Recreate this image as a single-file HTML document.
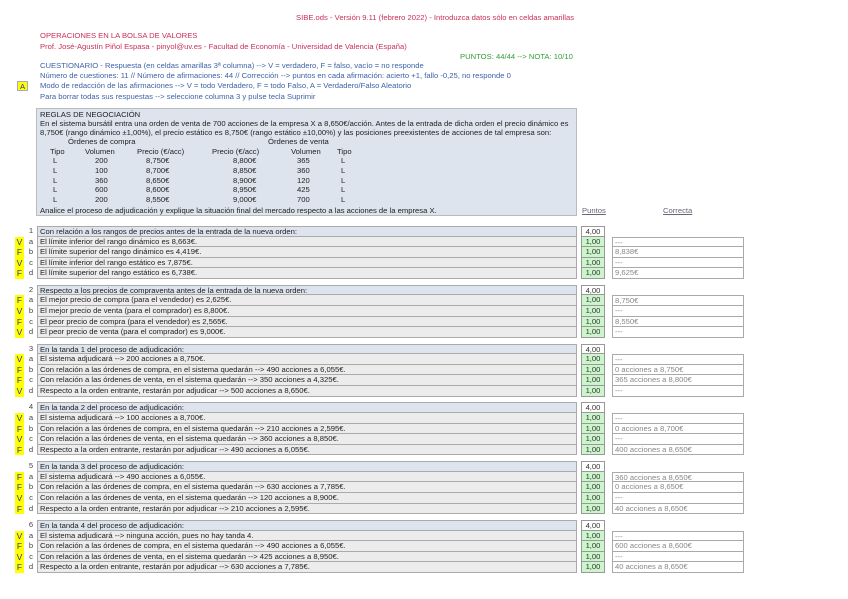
<!DOCTYPE html>
<html><head><meta charset="utf-8"><style>
*{margin:0;padding:0;box-sizing:border-box}
body{width:848px;height:599px;background:#fff;position:relative;overflow:hidden;font-family:"Liberation Sans",sans-serif;font-size:7.65px;color:#222}
.a{position:absolute;white-space:nowrap;line-height:10px}
.red{color:#c8305a}.blue{color:#3d62a8}.grn{color:#3a9a3a}
.rules{position:absolute;left:36px;top:108px;width:541px;height:108px;background:#dde4ee;border:1px solid #bbb}
.blk{position:absolute;left:15px;width:833px}
.r{position:relative;height:10.6px;line-height:10px}
.r>div{position:absolute;top:0;height:10.6px;padding-left:2px;white-space:nowrap;overflow:hidden}
.l{left:0;width:9px;background:#ffff00;color:#2a3a90;font-size:8.5px;text-align:center;padding:0!important}
.i{left:11px;width:10px;background:#fff;color:#444;text-align:center;padding:0!important}
.t{left:22px;width:540px;background:#ececec;border:1px solid #aaa;border-top:none}
.h .t{background:#dde4ee;border-top:1px solid #aaa}
.p{left:566px;width:24px;background:#ccf5cc;border:1px solid #999;border-top:none;color:#333;text-align:center;padding:0!important}
.h .p{background:#fff;border-top:1px solid #999}
.c{left:597px;width:132px;background:#fff;border:1px solid #aaa;border-top:none;color:#888}
.r2 .c{border-top:1px solid #aaa}
</style></head><body>
<div class="a red" style="left:296px;top:13px">SIBE.ods - Versión 9.11 (febrero 2022) - Introduzca datos sólo en celdas amarillas</div>
<div class="a red" style="left:40px;top:31px">OPERACIONES EN LA BOLSA DE VALORES</div>
<div class="a red" style="left:40px;top:42px">Prof. José-Agustín Piñol Espasa - pinyol@uv.es - Facultad de Economía - Universidad de Valencia (España)</div>
<div class="a grn" style="left:460px;top:52px">PUNTOS: 44/44 --&gt; NOTA: 10/10</div>
<div class="a blue" style="left:40px;top:61px">CUESTIONARIO - Respuesta (en celdas amarillas 3ª columna) --&gt; V = verdadero, F = falso, vacío = no responde</div>
<div class="a blue" style="left:40px;top:71px">Número de cuestiones: 11 // Número de afirmaciones: 44 // Corrección --&gt; puntos en cada afirmación: acierto +1, fallo -0,25, no responde 0</div>
<div class="a" style="left:17px;top:81px;width:11px;height:10px;background:#ffff00;border:1px solid #aab;color:#2a3a90;text-align:center;line-height:9px">A</div>
<div class="a blue" style="left:40px;top:81px">Modo de redacción de las afirmaciones --&gt; V = todo Verdadero, F = todo Falso, A = Verdadero/Falso Aleatorio</div>
<div class="a blue" style="left:40px;top:92px">Para borrar todas sus respuestas --&gt; seleccione columna 3 y pulse tecla Suprimir</div>

<div class="rules"></div>
<div class="a" style="left:40px;top:110px">REGLAS DE NEGOCIACIÓN</div>
<div class="a" style="left:40px;top:119px">En el sistema bursátil entra una orden de venta de 700 acciones de la empresa X a 8,650€/acción. Antes de la entrada de dicha orden el precio dinámico es</div>
<div class="a" style="left:40px;top:128px">8,750€ (rango dinámico ±1,00%), el precio estático es 8,750€ (rango estático ±10,00%) y las posiciones preexistentes de acciones de tal empresa son:</div>
<div class="a" style="left:68px;top:137px">Órdenes de compra</div>
<div class="a" style="left:268px;top:137px">Órdenes de venta</div>
<div class="a" style="left:50px;top:147px">Tipo</div><div class="a" style="left:85px;top:147px">Volumen</div><div class="a" style="left:137px;top:147px">Precio (€/acc)</div><div class="a" style="left:212px;top:147px">Precio (€/acc)</div><div class="a" style="left:291px;top:147px">Volumen</div><div class="a" style="left:337px;top:147px">Tipo</div>
<div class="a" style="left:53px;top:156px;line-height:9.8px">L<br>L<br>L<br>L<br>L</div>
<div class="a" style="left:95px;top:156px;line-height:9.8px">200<br>100<br>360<br>600<br>200</div>
<div class="a" style="left:146px;top:156px;line-height:9.8px">8,750€<br>8,700€<br>8,650€<br>8,600€<br>8,550€</div>
<div class="a" style="left:233px;top:156px;line-height:9.8px">8,800€<br>8,850€<br>8,900€<br>8,950€<br>9,000€</div>
<div class="a" style="left:297px;top:156px;line-height:9.8px">365<br>360<br>120<br>425<br>700</div>
<div class="a" style="left:341px;top:156px;line-height:9.8px">L<br>L<br>L<br>L<br>L</div>
<div class="a" style="left:40px;top:206px">Analice el proceso de adjudicación y explique la situación final del mercado respecto a las acciones de la empresa X.</div>
<div class="a" style="left:582px;top:206px;color:#667;text-decoration:underline">Puntos</div>
<div class="a" style="left:663px;top:206px;color:#667;text-decoration:underline">Correcta</div>

<div class="blk" style="top:226px">
<div class="r h"><div class="i">1</div><div class="t">Con relación a los rangos de precios antes de la entrada de la nueva orden:</div><div class="p">4,00</div></div>
<div class="r r2"><div class="l">V</div><div class="i">a</div><div class="t">El límite inferior del rango dinámico es 8,663€.</div><div class="p">1,00</div><div class="c">---</div></div>
<div class="r"><div class="l">F</div><div class="i">b</div><div class="t">El límite superior del rango dinámico es 4,419€.</div><div class="p">1,00</div><div class="c">8,838€</div></div>
<div class="r"><div class="l">V</div><div class="i">c</div><div class="t">El límite inferior del rango estático es 7,875€.</div><div class="p">1,00</div><div class="c">---</div></div>
<div class="r"><div class="l">F</div><div class="i">d</div><div class="t">El límite superior del rango estático es 6,738€.</div><div class="p">1,00</div><div class="c">9,625€</div></div>
</div>

<div class="blk" style="top:284.8px">
<div class="r h"><div class="i">2</div><div class="t">Respecto a los precios de compraventa antes de la entrada de la nueva orden:</div><div class="p">4,00</div></div>
<div class="r r2"><div class="l">F</div><div class="i">a</div><div class="t">El mejor precio de compra (para el vendedor) es 2,625€.</div><div class="p">1,00</div><div class="c">8,750€</div></div>
<div class="r"><div class="l">V</div><div class="i">b</div><div class="t">El mejor precio de venta (para el comprador) es 8,800€.</div><div class="p">1,00</div><div class="c">---</div></div>
<div class="r"><div class="l">F</div><div class="i">c</div><div class="t">El peor precio de compra (para el vendedor) es 2,565€.</div><div class="p">1,00</div><div class="c">8,550€</div></div>
<div class="r"><div class="l">V</div><div class="i">d</div><div class="t">El peor precio de venta (para el comprador) es 9,000€.</div><div class="p">1,00</div><div class="c">---</div></div>
</div>

<div class="blk" style="top:343.6px">
<div class="r h"><div class="i">3</div><div class="t">En la tanda 1 del proceso de adjudicación:</div><div class="p">4,00</div></div>
<div class="r r2"><div class="l">V</div><div class="i">a</div><div class="t">El sistema adjudicará --&gt; 200 acciones a 8,750€.</div><div class="p">1,00</div><div class="c">---</div></div>
<div class="r"><div class="l">F</div><div class="i">b</div><div class="t">Con relación a las órdenes de compra, en el sistema quedarán --&gt; 490 acciones a 6,055€.</div><div class="p">1,00</div><div class="c">0 acciones a 8,750€</div></div>
<div class="r"><div class="l">F</div><div class="i">c</div><div class="t">Con relación a las órdenes de venta, en el sistema quedarán --&gt; 350 acciones a 4,325€.</div><div class="p">1,00</div><div class="c">365 acciones a 8,800€</div></div>
<div class="r"><div class="l">V</div><div class="i">d</div><div class="t">Respecto a la orden entrante, restarán por adjudicar --&gt; 500 acciones a 8,650€.</div><div class="p">1,00</div><div class="c">---</div></div>
</div>

<div class="blk" style="top:402.4px">
<div class="r h"><div class="i">4</div><div class="t">En la tanda 2 del proceso de adjudicación:</div><div class="p">4,00</div></div>
<div class="r r2"><div class="l">V</div><div class="i">a</div><div class="t">El sistema adjudicará --&gt; 100 acciones a 8,700€.</div><div class="p">1,00</div><div class="c">---</div></div>
<div class="r"><div class="l">F</div><div class="i">b</div><div class="t">Con relación a las órdenes de compra, en el sistema quedarán --&gt; 210 acciones a 2,595€.</div><div class="p">1,00</div><div class="c">0 acciones a 8,700€</div></div>
<div class="r"><div class="l">V</div><div class="i">c</div><div class="t">Con relación a las órdenes de venta, en el sistema quedarán --&gt; 360 acciones a 8,850€.</div><div class="p">1,00</div><div class="c">---</div></div>
<div class="r"><div class="l">F</div><div class="i">d</div><div class="t">Respecto a la orden entrante, restarán por adjudicar --&gt; 490 acciones a 6,055€.</div><div class="p">1,00</div><div class="c">400 acciones a 8,650€</div></div>
</div>

<div class="blk" style="top:461.2px">
<div class="r h"><div class="i">5</div><div class="t">En la tanda 3 del proceso de adjudicación:</div><div class="p">4,00</div></div>
<div class="r r2"><div class="l">F</div><div class="i">a</div><div class="t">El sistema adjudicará --&gt; 490 acciones a 6,055€.</div><div class="p">1,00</div><div class="c">360 acciones a 8,650€</div></div>
<div class="r"><div class="l">F</div><div class="i">b</div><div class="t">Con relación a las órdenes de compra, en el sistema quedarán --&gt; 630 acciones a 7,785€.</div><div class="p">1,00</div><div class="c">0 acciones a 8,650€</div></div>
<div class="r"><div class="l">V</div><div class="i">c</div><div class="t">Con relación a las órdenes de venta, en el sistema quedarán --&gt; 120 acciones a 8,900€.</div><div class="p">1,00</div><div class="c">---</div></div>
<div class="r"><div class="l">F</div><div class="i">d</div><div class="t">Respecto a la orden entrante, restarán por adjudicar --&gt; 210 acciones a 2,595€.</div><div class="p">1,00</div><div class="c">40 acciones a 8,650€</div></div>
</div>

<div class="blk" style="top:520px">
<div class="r h"><div class="i">6</div><div class="t">En la tanda 4 del proceso de adjudicación:</div><div class="p">4,00</div></div>
<div class="r r2"><div class="l">V</div><div class="i">a</div><div class="t">El sistema adjudicará --&gt; ninguna acción, pues no hay tanda 4.</div><div class="p">1,00</div><div class="c">---</div></div>
<div class="r"><div class="l">F</div><div class="i">b</div><div class="t">Con relación a las órdenes de compra, en el sistema quedarán --&gt; 490 acciones a 6,055€.</div><div class="p">1,00</div><div class="c">600 acciones a 8,600€</div></div>
<div class="r"><div class="l">V</div><div class="i">c</div><div class="t">Con relación a las órdenes de venta, en el sistema quedarán --&gt; 425 acciones a 8,950€.</div><div class="p">1,00</div><div class="c">---</div></div>
<div class="r"><div class="l">F</div><div class="i">d</div><div class="t">Respecto a la orden entrante, restarán por adjudicar --&gt; 630 acciones a 7,785€.</div><div class="p">1,00</div><div class="c">40 acciones a 8,650€</div></div>
</div>
</body></html>
